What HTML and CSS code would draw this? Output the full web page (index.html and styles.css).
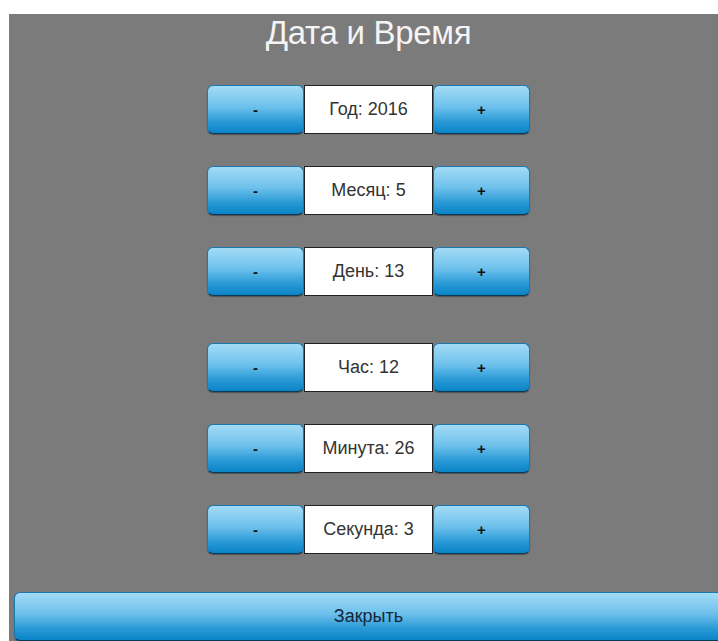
FILE: index.html
```html
<!DOCTYPE html>
<html lang="ru">
<head>
<meta charset="utf-8">
<title>Дата и Время</title>
<link rel="stylesheet" href="styles.css">
</head>
<body>
<div class="panel">
  <h1 class="title">Дата и Время</h1>
  <div class="groups">
    <div class="group">
      <div class="spin"><button class="btn">-</button><div class="value">Год: 2016</div><button class="btn">+</button></div>
      <div class="spin"><button class="btn">-</button><div class="value">Месяц: 5</div><button class="btn">+</button></div>
      <div class="spin"><button class="btn">-</button><div class="value">День: 13</div><button class="btn">+</button></div>
    </div>
    <div class="group">
      <div class="spin"><button class="btn">-</button><div class="value">Час: 12</div><button class="btn">+</button></div>
      <div class="spin"><button class="btn">-</button><div class="value">Минута: 26</div><button class="btn">+</button></div>
      <div class="spin"><button class="btn">-</button><div class="value">Секунда: 3</div><button class="btn">+</button></div>
    </div>
  </div>
  <button class="btn close">Закрыть</button>
</div>
</body>
</html>
```
FILE: styles.css
```css
html, body {
  margin: 0;
  padding: 0;
  background: #ffffff;
  overflow: hidden;
  height: 100%;
}

body {
  font-family: "Liberation Sans", Arial, sans-serif;
}

.panel {
  margin: 14px 0 0 9px;
  width: 719px;
  min-height: 700px;
  background: #7b7b7b;
  box-sizing: border-box;
  padding: 0 5px;
  display: flex;
  flex-direction: column;
  align-items: center;
}

.title {
  margin: 0;
  padding-top: 1px;
  height: 71px;
  box-sizing: border-box;
  font-size: 33px;
  font-weight: normal;
  color: #f4f4f4;
  line-height: 36px;
  letter-spacing: -0.3px;
}

.groups {
  display: flex;
  flex-direction: column;
  gap: 47px;
}

.group {
  display: flex;
  flex-direction: column;
  gap: 32px;
}

.spin {
  display: flex;
  height: 49px;
}

.btn {
  font-family: "Liberation Sans", Arial, sans-serif;
  font-size: 15px;
  font-weight: bold;
  color: #111;
  border: 1px solid #1b78b0;
  border-bottom-color: #0b3a58;
  border-radius: 6px;
  background: linear-gradient(#a3dbf6 0%, #6cc0eb 45%, #2a9ad6 75%, #0a84c6 100%);
  box-shadow: 0 1px 1px rgba(0, 0, 0, 0.35);
  padding: 0;
  cursor: pointer;
}

.spin .btn {
  width: 97px;
}

.value {
  width: 129px;
  box-sizing: border-box;
  background: #ffffff;
  border: 1px solid #222;
  display: flex;
  align-items: center;
  justify-content: center;
  font-size: 18px;
  color: #333;
}

.close {
  margin-top: 38px;
  width: 100%;
  height: 49px;
  font-size: 18px;
  font-weight: normal;
  color: #14263a;
}
```
